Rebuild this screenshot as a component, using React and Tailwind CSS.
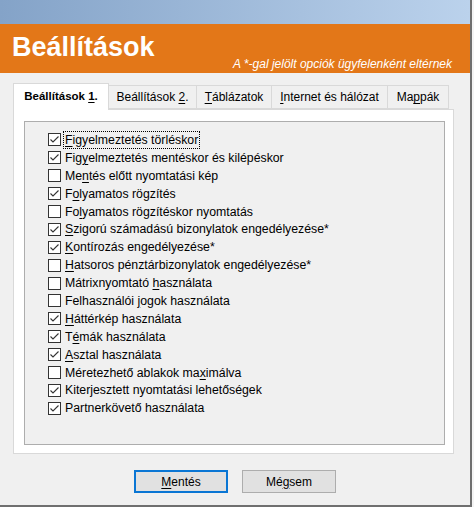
import React, { useState } from 'react';

// '&' marks the access key letter, as in Windows resources
const OPTIONS = [
  { label: '&Figyelmeztetés törléskor', checked: true, focused: true },
  { label: 'Fig&yelmeztetés mentéskor és kilépéskor', checked: true },
  { label: 'Me&ntés előtt nyomtatási kép', checked: false },
  { label: 'F&olyamatos rögzítés', checked: true },
  { label: 'Fo&lyamatos rögzítéskor nyomtatás', checked: false },
  { label: '&Szigorú számadású bizonylatok engedélyezése*', checked: true },
  { label: '&Kontírozás engedélyezése*', checked: true },
  { label: '&Hatsoros pénztárbizonylatok engedélyezése*', checked: false },
  { label: 'Mátrixnyomtató &használata', checked: false },
  { label: 'Felhasználói &jogok használata', checked: false },
  { label: '&Háttérkép használata', checked: true },
  { label: 'T&émák használata', checked: true },
  { label: '&Asztal használata', checked: true },
  { label: 'Méretezhető ablakok ma&ximálva', checked: false },
  { label: 'Kiterjesztett nyomtatási lehetőségek', checked: true },
  { label: 'Partnerkövető használata', checked: true },
];

const TABS = [
  { label: 'Beállítások &1.', w: 'w-[96px]' },
  { label: 'Beállítások &2.', w: 'w-[89px]' },
  { label: '&Táblázatok', w: 'w-[76px]' },
  { label: '&Internet és hálózat', w: 'w-[117px]' },
  { label: 'Ma&ppák', w: 'w-[62px]' },
];

const Mnemonic = ({ text }) => {
  const i = text.indexOf('&');
  if (i < 0) return <span>{text}</span>;
  return (
    <span className="whitespace-pre">
      {text.slice(0, i)}
      <span className="underline underline-offset-2">{text[i + 1]}</span>
      {text.slice(i + 2)}
    </span>
  );
};

const CheckBox = ({ checked, onClick }) => (
  <button
    type="button"
    onClick={onClick}
    className="w-[13px] h-[13px] border border-[#333333] bg-white flex items-center justify-center shrink-0"
  >
    {checked && (
      <svg width="11" height="11" viewBox="0 0 11 11" fill="none">
        <polyline points="1.5,5.5 4,8 9.5,2.5" stroke="#333333" strokeWidth="1.1" />
      </svg>
    )}
  </button>
);

const App = () => {
  const [items, setItems] = useState(OPTIONS);
  const [active, setActive] = useState(0);

  const toggle = (idx) => {
    setItems(items.map((it, i) => (i === idx ? { ...it, checked: !it.checked } : it)));
  };

  return (
    <div className="w-[474px] h-[507px] bg-[#f4f4f4] font-['Liberation_Sans',Arial,sans-serif] text-black overflow-hidden">
      <div className="w-[472px] h-[507px] bg-[#f0f0f0] border-r-2 border-b-2 border-[#6f6f6f] flex flex-col">
        {/* fejléc */}
        <div className="h-[24px] bg-gradient-to-r from-[#84a3c8] to-[#bbd2ec]" />
        <div className="h-[49px] bg-[#e37718] flex flex-col">
          <h1 className="pl-[12px] pt-[10px] text-[27px] leading-[27px] font-bold text-white">Beállítások</h1>
          <p className="-mt-[4px] pr-[18px] text-right text-[12px] leading-[14px] italic text-white">
            A *-gal jelölt opciók ügyfelenként eltérnek
          </p>
        </div>

        {/* fülek */}
        <div className="ml-[13px] mt-[9px] w-[441px]">
          <div className="flex items-end h-[27px] relative z-10">
            {TABS.map((t, i) =>
              i === active ? (
                <div
                  key={t.label}
                  className={`${t.w} h-[27px] -mb-px bg-white border border-b-0 border-[#d9d9d9] flex items-center justify-center text-[11.5px] font-bold pb-[1px]`}
                >
                  <Mnemonic text={t.label} />
                </div>
              ) : (
                <button
                  key={t.label}
                  type="button"
                  onClick={() => setActive(i)}
                  className={`${t.w} h-[24px] bg-[#f0f0f0] border border-[#d9d9d9] -ml-px first:ml-0 flex items-center justify-center text-[12px]`}
                >
                  <Mnemonic text={t.label} />
                </button>
              )
            )}
          </div>

          <div className="h-[345px] bg-white border border-[#d9d9d9]">
            <div className="mt-[11px] ml-[10px] w-[421px] h-[324px] border border-[#adadad] bg-[#f0f0f0] pt-[9px] pl-[23px]">
              {items.map((it, i) => (
                <div key={it.label} className="h-[17.9px] flex items-center gap-[2px]">
                  <CheckBox checked={it.checked} onClick={() => toggle(i)} />
                  <span
                    className={`text-[12.3px] leading-[16px] px-[1px] border border-dotted ${
                      it.focused ? 'border-black' : 'border-transparent'
                    }`}
                  >
                    <Mnemonic text={it.label} />
                  </span>
                </div>
              ))}
            </div>
          </div>
        </div>

        {/* gombok */}
        <div className="mt-[16px] flex justify-center gap-[14px]">
          <button type="button" className="w-[94px] h-[23px] bg-[#e1e1e1] border-2 border-[#0a76d4] text-[12px]">
            <Mnemonic text="&Mentés" />
          </button>
          <button type="button" className="w-[94px] h-[23px] bg-[#e1e1e1] border border-[#adadad] text-[12px]">
            <Mnemonic text="Mé&gsem" />
          </button>
        </div>
      </div>
    </div>
  );
};

export default App;
